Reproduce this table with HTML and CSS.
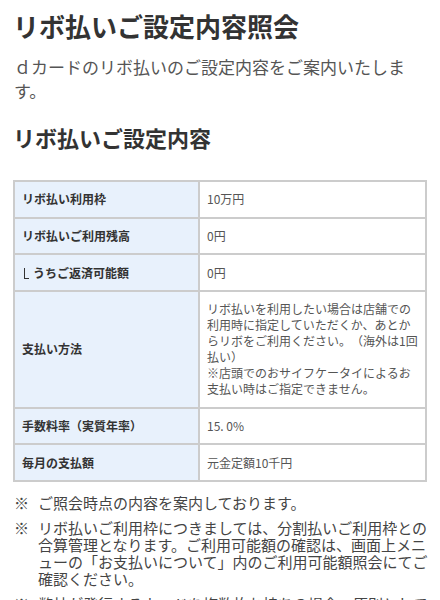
FILE: index.html
```html
<!DOCTYPE html>
<html lang="ja">
<head>
<meta charset="utf-8">
<title>リボ払いご設定内容照会</title>
<link rel="stylesheet" href="styles.css">
</head>
<body>
<main class="page">
  <h1 class="title">リボ払いご設定内容照会</h1>
  <p class="lead">ｄカードのリボ払いのご設定内容をご案内いたします。</p>
  <h2 class="section">リボ払いご設定内容</h2>
  <table class="info">
    <tbody>
      <tr><th>リボ払い利用枠</th><td>10万円</td></tr>
      <tr><th>リボ払いご利用残高</th><td>0円</td></tr>
      <tr><th><span class="corner" aria-hidden="true"></span>うちご返済可能額</th><td>0円</td></tr>
      <tr><th>支払い方法</th><td>リボ払いを利用したい場合は店舗での利用時に指定していただくか、あとからリボをご利用ください。（海外は1回払い）<br>※店頭でのおサイフケータイによるお支払い時はご指定できません。</td></tr>
      <tr><th>手数料率（実質年率）</th><td>15. 0%</td></tr>
      <tr><th>毎月の支払額</th><td>元金定額10千円</td></tr>
    </tbody>
  </table>
  <ul class="notes">
    <li><span class="mark">※</span><span class="note-text">ご照会時点の内容を案内しております。</span></li>
    <li><span class="mark">※</span><span class="note-text">リボ払いご利用枠につきましては、分割払いご利用枠との合算管理となります。ご利用可能額の確認は、画面上メニューの「お支払いについて」内のご利用可能額照会にてご確認ください。</span></li>
    <li><span class="mark">※</span><span class="note-text">弊社が発行するカードを複数枚お持ちの場合、原則としてご利用枠は共有となります。</span></li>
  </ul>
</main>
</body>
</html>
```

FILE: styles.css
```css
html, body {
  margin: 0;
  padding: 0;
  background: #ffffff;
}

body {
  font-family: "Noto Sans CJK JP", "Noto Sans", sans-serif;
  color: #333333;
  text-spacing-trim: space-all;
}

.page {
  padding: 10px 13px 20px 13px;
}

.title {
  margin: 0;
  font-size: 26px;
  line-height: 32px;
  font-weight: 700;
  color: #333333;
}

.lead {
  margin: 13px 14px 0 1px;
  font-size: 17px;
  line-height: 24px;
  color: #555555;
}

.section {
  margin: 20px 0 0 0;
  font-size: 22px;
  line-height: 28px;
  font-weight: 700;
  color: #333333;
}

.info {
  margin-top: 29px;
  width: 414px;
  border-collapse: collapse;
  border: 2px solid #cccccc;
  font-size: 12px;
  line-height: 16px;
}

.info th,
.info td {
  border: 2px solid #cccccc;
  padding: 9.33px 7px;
  vertical-align: middle;
  text-align: left;
}

.info th {
  width: 169px;
  background: #e8f1fc;
  font-weight: 700;
  color: #333333;
}

.info td {
  padding-right: 4px;
  color: #555555;
}

.corner {
  display: inline-block;
  width: 4px;
  height: 10px;
  margin: 0 4px 0 2px;
  border-left: 1.5px solid #333333;
  border-bottom: 1.5px solid #333333;
  vertical-align: -1px;
}

.notes {
  list-style: none;
  margin: 12px -6px 0 1px;
  padding: 0;
  font-size: 15px;
  line-height: 17px;
  color: #444444;
}

.notes li {
  display: flex;
  margin-bottom: 8px;
}

.mark {
  flex: 0 0 24px;
}

.note-text {
  flex: 1 1 auto;
}
```
